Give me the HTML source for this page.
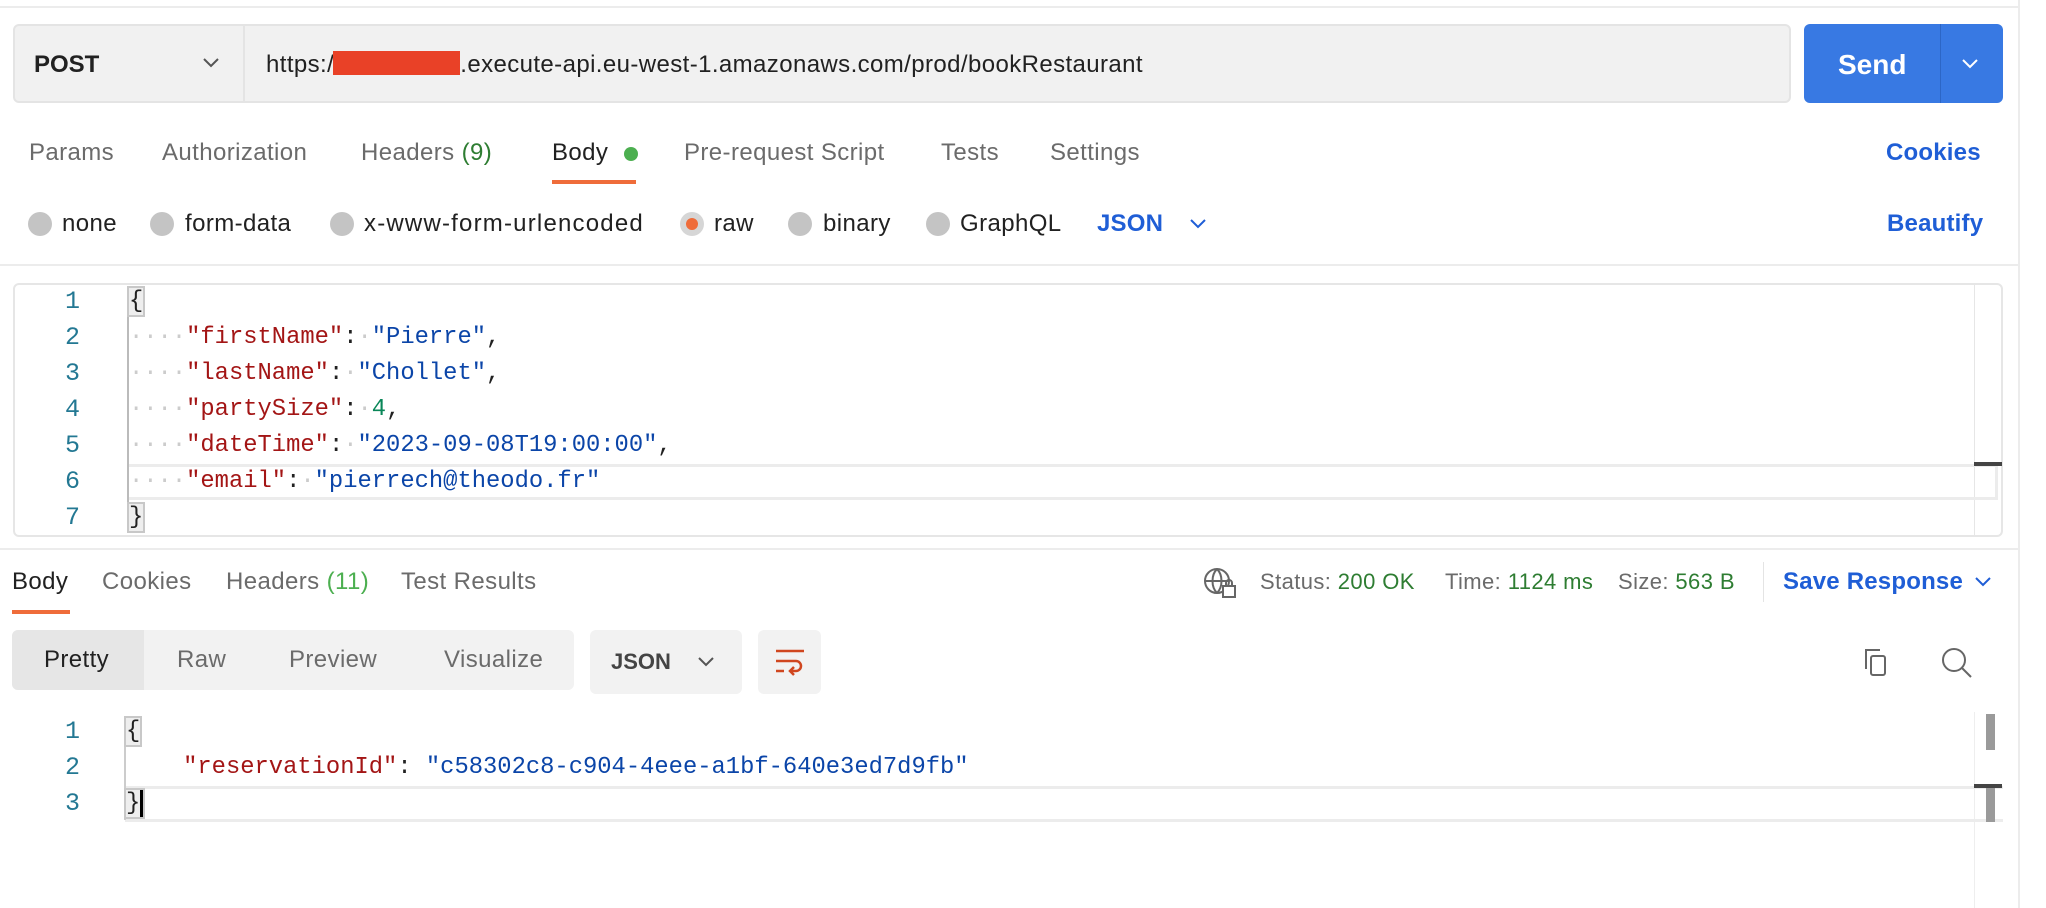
<!DOCTYPE html>
<html><head><meta charset="utf-8"><style>
*{margin:0;padding:0;box-sizing:border-box}
body{width:2046px;height:908px;background:#fff;font-family:"Liberation Sans",sans-serif;position:relative;overflow:hidden;color:#212121}
.a{position:absolute;white-space:nowrap}
.t{font-size:24px;color:#6b6b6b;line-height:30px;letter-spacing:0.4px}
.mono{font-family:"Liberation Mono",monospace;font-size:23.8px;line-height:36px;white-space:pre}
.ln{color:#237893;width:40px;text-align:right;font-size:25px}
.k{color:#a31515}.s{color:#0b45a8}.n{color:#098658}
.dot{color:#ccc}
.radio{position:absolute;width:24px;height:24px;border-radius:50%;background:#c4c4c4;top:212px}
.blue{color:#1f5ed6;font-weight:bold;letter-spacing:0.2px}
.g{color:#2e7d32}
.st{font-size:22px;color:#6b6b6b;line-height:28px;letter-spacing:0.4px}
</style></head><body>
<div class="a" style="left:0;top:6px;width:2019px;height:2px;background:#ececec"></div>
<div class="a" style="left:2018px;top:0;width:2px;height:908px;background:#ececec"></div>

<div class="a" style="left:13px;top:24px;height:79px;background:#f1f1f1;border:2px solid #e4e4e4;border-radius:6px;width:1778px"></div>
<div class="a" style="left:243px;top:26px;width:2px;height:75px;background:#e4e4e4"></div>
<div class="a" style="left:34px;top:50px;font-size:24px;font-weight:bold;color:#212121;line-height:30px">POST</div>
<svg class="a" style="left:203px;top:58px" width="16" height="10"><path d="M1 1L8 8L15 1" stroke="#555" stroke-width="2" fill="none"/></svg>
<div class="a" style="left:266px;top:50px;font-size:24px;color:#212121;line-height:30px;letter-spacing:0.4px">https://<span style="display:inline-block;width:127px;height:24px;background:#e94127;vertical-align:-3px;margin-left:-8px"></span>.execute-api.eu-west-1.amazonaws.com/prod/bookRestaurant</div>
<div class="a" style="left:1804px;top:24px;width:199px;height:79px;background:#3879e3;border-radius:6px"></div>
<div class="a" style="left:1940px;top:24px;width:1px;height:79px;background:#2c66c6"></div>
<div class="a" style="left:1838px;top:49px;font-size:28px;font-weight:bold;color:#fff;line-height:32px">Send</div>
<svg class="a" style="left:1962px;top:59px" width="16" height="10"><path d="M1 1L8 8L15 1" stroke="#fff" stroke-width="2" fill="none"/></svg>

<div class="a t" style="left:29px;top:138px">Params</div>
<div class="a t" style="left:162px;top:138px">Authorization</div>
<div class="a t" style="left:361px;top:138px">Headers <span class="g">(9)</span></div>
<div class="a t" style="left:552px;top:138px;color:#212121">Body</div>
<div class="a" style="left:624px;top:147px;width:14px;height:14px;border-radius:50%;background:#4caf50"></div>
<div class="a" style="left:552px;top:180px;width:84px;height:4px;background:#ef6c3a"></div>
<div class="a t" style="left:684px;top:138px">Pre-request Script</div>
<div class="a t" style="left:941px;top:138px">Tests</div>
<div class="a t" style="left:1050px;top:138px">Settings</div>
<div class="a t blue" style="left:1886px;top:138px">Cookies</div>

<div class="radio" style="left:28px"></div><div class="a t" style="left:62px;top:209px;color:#212121">none</div>
<div class="radio" style="left:150px"></div><div class="a t" style="left:185px;top:209px;color:#212121">form-data</div>
<div class="radio" style="left:330px"></div><div class="a t" style="left:364px;top:209px;color:#212121;letter-spacing:1.2px">x-www-form-urlencoded</div>
<div class="radio" style="left:680px;background:#d6d6d6"></div><div class="a" style="left:686px;top:218px;width:12px;height:12px;border-radius:50%;background:#ef6c3a"></div><div class="a t" style="left:714px;top:209px;color:#212121">raw</div>
<div class="radio" style="left:788px"></div><div class="a t" style="left:823px;top:209px;color:#212121">binary</div>
<div class="radio" style="left:926px"></div><div class="a t" style="left:960px;top:209px;color:#212121">GraphQL</div>
<div class="a t blue" style="left:1097px;top:209px">JSON</div>
<svg class="a" style="left:1190px;top:219px" width="16" height="10"><path d="M1 1L8 8L15 1" stroke="#1f5ed6" stroke-width="2" fill="none"/></svg>
<div class="a t blue" style="left:1887px;top:209px">Beautify</div>
<div class="a" style="left:0;top:264px;width:2019px;height:2px;background:#ececec"></div>

<div class="a" style="left:13px;top:283px;width:1990px;height:254px;border:2px solid #e6e6e6;border-radius:6px"></div>
<div class="a" style="left:1974px;top:285px;width:1px;height:250px;background:#e6e6e6"></div>
<div class="a" style="left:129px;top:464px;width:1869px;height:36px;border:3px solid #ececec;border-left:none"></div>
<div class="a" style="left:1974px;top:462px;width:28px;height:4px;background:#444"></div>
<div class="a" style="left:127px;top:290px;width:2px;height:242px;background:#bbb"></div>
<div class="a mono" style="left:40px;top:284px"><div class="ln">1</div><div class="ln">2</div><div class="ln">3</div><div class="ln">4</div><div class="ln">5</div><div class="ln">6</div><div class="ln">7</div></div>
<div class="a mono" style="left:129px;top:284px"><div><span style="background:#eee;outline:2px solid #c8c8c8">{</span></div><div><span class="dot">····</span><span class="k">"firstName"</span>:<span class="dot">·</span><span class="s">"Pierre"</span>,</div><div><span class="dot">····</span><span class="k">"lastName"</span>:<span class="dot">·</span><span class="s">"Chollet"</span>,</div><div><span class="dot">····</span><span class="k">"partySize"</span>:<span class="dot">·</span><span class="n">4</span>,</div><div><span class="dot">····</span><span class="k">"dateTime"</span>:<span class="dot">·</span><span class="s">"2023-09-08T19:00:00"</span>,</div><div><span class="dot">····</span><span class="k">"email"</span>:<span class="dot">·</span><span class="s">"pierrech@theodo.fr"</span></div><div><span style="background:#eee;outline:2px solid #c8c8c8">}</span></div></div>
<div class="a" style="left:0;top:548px;width:2019px;height:2px;background:#ececec"></div>

<div class="a t" style="left:12px;top:567px;color:#212121">Body</div>
<div class="a" style="left:12px;top:610px;width:58px;height:4px;background:#ef6c3a"></div>
<div class="a t" style="left:102px;top:567px">Cookies</div>
<div class="a t" style="left:226px;top:567px">Headers <span class="g" style="color:#4caf50">(11)</span></div>
<div class="a t" style="left:401px;top:567px">Test Results</div>
<svg class="a" style="left:1203px;top:567px" width="34" height="32" fill="none" stroke="#666" stroke-width="2"><circle cx="14" cy="14" r="12"/><path d="M2 14h24M14 2c-6 6-6 18 0 24M14 2c6 6 6 18 0 24"/><rect x="20" y="19" width="12" height="11" fill="#fff"/><path d="M23 19v-3a3 3 0 0 1 6 0v3"/></svg>
<div class="a st" style="left:1260px;top:568px">Status: <span class="g">200 OK</span></div>
<div class="a st" style="left:1445px;top:568px">Time: <span class="g">1124 ms</span></div>
<div class="a st" style="left:1618px;top:568px">Size: <span class="g">563 B</span></div>
<div class="a" style="left:1763px;top:562px;width:1px;height:40px;background:#e4e4e4"></div>
<div class="a t blue" style="left:1783px;top:567px">Save Response</div>
<svg class="a" style="left:1975px;top:577px" width="16" height="10"><path d="M1 1L8 8L15 1" stroke="#1f5ed6" stroke-width="2" fill="none"/></svg>

<div class="a" style="left:12px;top:630px;width:562px;height:60px;background:#f2f2f2;border-radius:6px"></div>
<div class="a" style="left:12px;top:630px;width:132px;height:60px;background:#e6e6e6;border-radius:6px 0 0 6px"></div>
<div class="a t" style="left:44px;top:645px;color:#212121">Pretty</div>
<div class="a t" style="left:177px;top:645px">Raw</div>
<div class="a t" style="left:289px;top:645px">Preview</div>
<div class="a t" style="left:444px;top:645px">Visualize</div>
<div class="a" style="left:590px;top:630px;width:152px;height:64px;background:#f2f2f2;border-radius:6px"></div>
<div class="a" style="left:611px;top:648px;font-size:22px;font-weight:bold;color:#444;line-height:28px">JSON</div>
<svg class="a" style="left:698px;top:657px" width="16" height="10"><path d="M1 1L8 8L15 1" stroke="#555" stroke-width="2" fill="none"/></svg>
<div class="a" style="left:758px;top:630px;width:63px;height:64px;background:#f2f2f2;border-radius:6px"></div>
<svg class="a" style="left:774px;top:648px" width="32" height="28" fill="none" stroke="#d0461f" stroke-width="2.5"><path d="M2 3h28M2 13h20a5 5 0 0 1 0 10h-6M20 19l-4 4 4 4M2 23h8"/></svg>
<svg class="a" style="left:1862px;top:647px" width="30" height="30" fill="none" stroke="#666" stroke-width="2"><path d="M4 22V3h14"/><rect x="9" y="9" width="14" height="19" rx="2"/></svg>
<svg class="a" style="left:1940px;top:646px" width="34" height="34" fill="none" stroke="#666" stroke-width="2"><circle cx="14" cy="14" r="11"/><path d="M22 22l9 9"/></svg>

<div class="a" style="left:1986px;top:714px;width:9px;height:36px;background:#9a9a9a"></div>
<div class="a" style="left:1974px;top:712px;width:1px;height:196px;background:#eee"></div>
<div class="a" style="left:125px;top:786px;width:1878px;height:36px;border-top:3px solid #ececec;border-bottom:3px solid #ececec"></div>
<div class="a" style="left:1974px;top:784px;width:28px;height:4px;background:#444"></div>
<div class="a" style="left:1986px;top:788px;width:9px;height:34px;background:#9a9a9a"></div>
<div class="a" style="left:124px;top:720px;width:2px;height:100px;background:#ccc"></div>
<div class="a mono" style="left:40px;top:714px"><div class="ln">1</div><div class="ln">2</div><div class="ln">3</div></div>
<div class="a mono" style="left:126px;top:714px"><div><span style="background:#eee;outline:2px solid #c8c8c8">{</span></div><div>    <span class="k">"reservationId"</span>: <span class="s">"c58302c8-c904-4eee-a1bf-640e3ed7d9fb"</span></div><div><span style="background:#eee;outline:2px solid #c8c8c8;border-right:3px solid #000">}</span></div></div>
</body></html>
